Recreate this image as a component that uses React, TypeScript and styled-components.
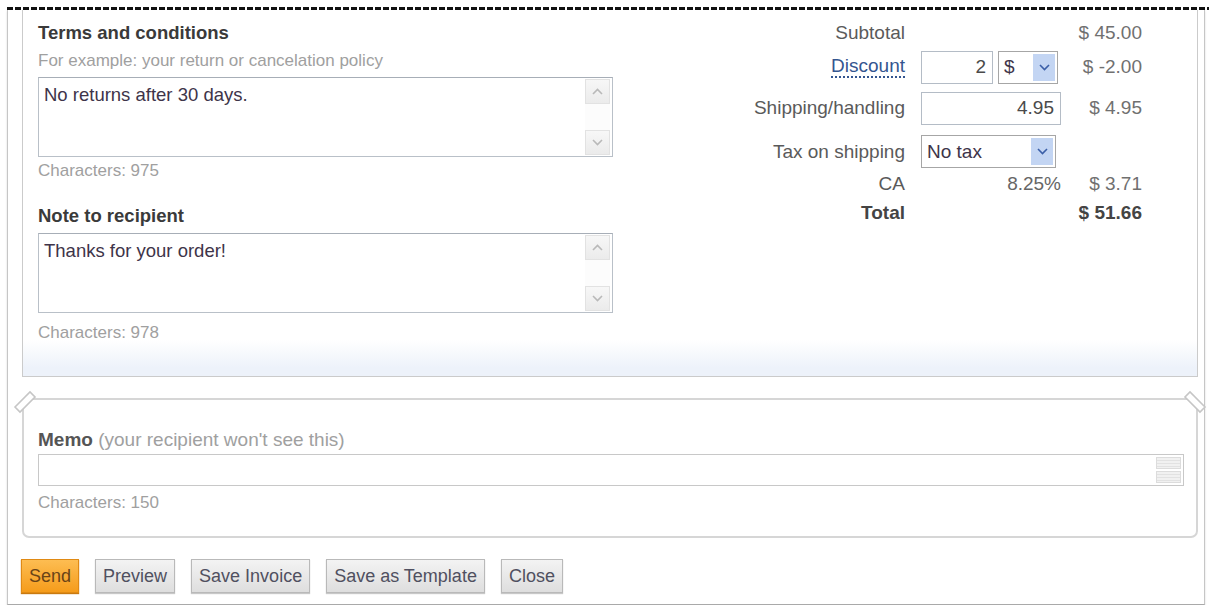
import React from "react";
import styled, { createGlobalStyle } from "styled-components";

const GlobalStyle = createGlobalStyle`
  html, body {
    margin: 0;
    padding: 0;
    background: #fff;
  }
  body {
    font-family: "Liberation Sans", Arial, sans-serif;
    color: #333;
  }
`;

const Chevron: React.FC<{ up?: boolean; color?: string }> = ({ up, color = "#b9b9b9" }) => (
  <svg width="11" height="7" viewBox="0 0 11 7">
    <path
      d={up ? "M1 6 L5.5 1.5 L10 6" : "M1 1 L5.5 5.5 L10 1"}
      stroke={color}
      strokeWidth="1.6"
      fill="none"
    />
  </svg>
);

const Notch: React.FC<{ side: "left" | "right" }> = ({ side }) => (
  <NotchMark $side={side} width="26" height="26" viewBox="0 0 26 26">
    <polygon
      points={side === "left" ? "2,18 17,3 22,8 7,23" : "24,18 9,3 4,8 19,23"}
      fill="#fff"
      stroke="#c6c6c6"
      strokeWidth="1.6"
    />
  </NotchMark>
);

interface FieldProps {
  text: string;
}

const TextField: React.FC<FieldProps> = ({ text }) => (
  <FieldBox>
    <FieldText>{text}</FieldText>
    <ScrollTrack>
      <ScrollButton>
        <Chevron up />
      </ScrollButton>
      <ScrollButton>
        <Chevron />
      </ScrollButton>
    </ScrollTrack>
  </FieldBox>
);

const SelectBox: React.FC<{ value: string; width: number }> = ({ value, width }) => (
  <Select style={{ width }}>
    <SelectValue>{value}</SelectValue>
    <SelectArrow>
      <Chevron color="#3b5fa8" />
    </SelectArrow>
  </Select>
);

export default function App() {
  return (
    <Page>
      <GlobalStyle />
      <DashedRule />
      <Frame>
        <Panel>
          <LeftColumn>
            <Title>Terms and conditions</Title>
            <Hint>For example: your return or cancelation policy</Hint>
            <TextField text="No returns after 30 days." />
            <Count $top={4}>Characters: 975</Count>
            <Title $top={24}>Note to recipient</Title>
            <TextField text="Thanks for your order!" />
            <Count $top={10}>Characters: 978</Count>
          </LeftColumn>

          <Summary>
            <Label>Subtotal</Label>
            <Cell />
            <Amount>$ 45.00</Amount>

            <Label>
              <LinkLabel>Discount</LinkLabel>
            </Label>
            <Cell>
              <NumberInput style={{ width: 72 }}>2</NumberInput>
              <SelectBox value="$" width={60} />
            </Cell>
            <Amount>$ -2.00</Amount>

            <Label>Shipping/handling</Label>
            <Cell>
              <NumberInput style={{ width: 140 }}>4.95</NumberInput>
            </Cell>
            <Amount>$ 4.95</Amount>

            <Label>Tax on shipping</Label>
            <Cell>
              <SelectBox value="No tax" width={135} />
            </Cell>
            <Amount />

            <Label>CA</Label>
            <Cell $right>8.25%</Cell>
            <Amount>$ 3.71</Amount>

            <Label $bold>Total</Label>
            <Cell />
            <Amount $bold>$ 51.66</Amount>
          </Summary>
        </Panel>

        <MemoBox>
          <Notch side="left" />
          <Notch side="right" />
          <MemoLabel>
            <strong>Memo</strong> <span>(your recipient won't see this)</span>
          </MemoLabel>
          <MemoInput>
            <Spinner>
              <SpinButton />
              <SpinButton />
            </Spinner>
          </MemoInput>
          <Count $top={7}>Characters: 150</Count>
        </MemoBox>

        <ButtonBar>
          <Button $primary>Send</Button>
          <Button>Preview</Button>
          <Button>Save Invoice</Button>
          <Button>Save as Template</Button>
          <Button>Close</Button>
        </ButtonBar>
      </Frame>
    </Page>
  );
}

const Page = styled.div`
  width: 1209px;
  padding-top: 7px;
`;

const DashedRule = styled.div`
  margin-left: 7px;
  height: 3px;
  background: repeating-linear-gradient(90deg, #111 0 6px, transparent 6px 8px);
`;

const Frame = styled.div`
  margin-left: 7px;
  width: 1196px;
  border: 1px solid #c6c6c6;
  border-top: none;
  border-bottom-color: #a9a9a9;
  box-shadow: 0 1px 2px rgba(0, 0, 0, 0.15);
  padding-bottom: 11px;
`;

const Panel = styled.div`
  box-sizing: border-box;
  margin-left: 14px;
  width: 1176px;
  display: flex;
  align-items: flex-start;
  padding: 12px 55px 33px 15px;
  border: 1px solid #cbcbcb;
  border-top: none;
  background: linear-gradient(#fff 0, #fff 330px, #edf2fa 358px, #edf2fa 100%);
`;

const LeftColumn = styled.div`
  width: 575px;
  display: flex;
  flex-direction: column;
`;

const Title = styled.div<{ $top?: number }>`
  margin-top: ${(p) => p.$top ?? 0}px;
  font-size: 18.5px;
  line-height: 22px;
  font-weight: bold;
  color: #3a3a3a;
`;

const Hint = styled.div`
  margin-top: 7px;
  font-size: 17px;
  line-height: 20px;
  color: #a0a0a0;
`;

const Count = styled.div<{ $top?: number }>`
  margin-top: ${(p) => p.$top ?? 6}px;
  font-size: 17px;
  line-height: 20px;
  color: #a0a0a0;
`;

const FieldBox = styled.div`
  box-sizing: border-box;
  margin-top: 6px;
  height: 80px;
  display: flex;
  border: 1px solid #b9c0c8;
  border-top-color: #a7aeb7;
  background: #fff;
`;

const FieldText = styled.div`
  flex: 1;
  padding: 6px 5px;
  font-size: 18.5px;
  line-height: 22px;
  color: #3e3449;
`;

const ScrollTrack = styled.div`
  width: 25px;
  margin: 1px 2px 1px 0;
  display: flex;
  flex-direction: column;
  justify-content: space-between;
  background: #fcfcfc;
`;

const ScrollButton = styled.div`
  box-sizing: border-box;
  height: 25px;
  display: flex;
  align-items: center;
  justify-content: center;
  border: 1px solid #e2e2e2;
  background: linear-gradient(#f7f7f7, #ebebeb);
`;

const Summary = styled.div`
  margin-left: auto;
  display: grid;
  grid-template-columns: max-content 140px 65px;
  grid-template-rows: 22px 34px 36px 39px 14px 32px;
  column-gap: 16px;
  row-gap: 6px;
  font-size: 19px;
  color: #5a5a5a;
`;

const Label = styled.div<{ $bold?: boolean }>`
  display: flex;
  align-items: center;
  justify-content: flex-end;
  white-space: nowrap;
  font-weight: ${(p) => (p.$bold ? "bold" : "normal")};
  color: ${(p) => (p.$bold ? "#444" : "#5a5a5a")};
`;

const LinkLabel = styled.span`
  color: #34558f;
  line-height: 20px;
  border-bottom: 2px dotted #34558f;
`;

const Cell = styled.div<{ $right?: boolean }>`
  display: flex;
  align-items: center;
  justify-content: ${(p) => (p.$right ? "flex-end" : "flex-start")};
  gap: 5px;
  color: #666;
`;

const Amount = styled.div<{ $bold?: boolean }>`
  display: flex;
  align-items: center;
  justify-content: flex-end;
  white-space: nowrap;
  font-weight: ${(p) => (p.$bold ? "bold" : "normal")};
  color: ${(p) => (p.$bold ? "#444" : "#707070")};
`;

const NumberInput = styled.div`
  box-sizing: border-box;
  height: 33px;
  display: flex;
  align-items: center;
  justify-content: flex-end;
  padding: 0 6px;
  border: 1px solid #b4bcc6;
  background: #fff;
  color: #4a4a4a;
`;

const Select = styled.div`
  box-sizing: border-box;
  height: 33px;
  display: flex;
  align-items: stretch;
  border: 1px solid #a6a6a6;
  background: #fff;
  padding: 2px;
`;

const SelectValue = styled.div`
  flex: 1;
  display: flex;
  align-items: center;
  padding-left: 3px;
  color: #3e3449;
`;

const SelectArrow = styled.div`
  width: 22px;
  display: flex;
  align-items: center;
  justify-content: center;
  background: #c3d5f3;
`;

const MemoBox = styled.div`
  position: relative;
  box-sizing: border-box;
  margin: 21px 0 0 14px;
  width: 1176px;
  height: 140px;
  padding: 29px 12px 0 14px;
  border: 2px solid #d6d6d6;
  border-radius: 7px;
`;

const NotchMark = styled.svg<{ $side: "left" | "right" }>`
  position: absolute;
  top: -11px;
  ${(p) => (p.$side === "left" ? "left: -11px;" : "right: -11px;")}
`;

const MemoLabel = styled.div`
  font-size: 19px;
  line-height: 22px;
  color: #a0a0a0;

  strong {
    color: #555;
  }
`;

const MemoInput = styled.div`
  box-sizing: border-box;
  margin-top: 3px;
  height: 32px;
  display: flex;
  justify-content: flex-end;
  padding: 2px;
  border: 1px solid #c8c8c8;
`;

const Spinner = styled.div`
  width: 25px;
  display: flex;
  flex-direction: column;
  gap: 2px;
`;

const SpinButton = styled.div`
  flex: 1;
  border: 1px solid #dcdcdc;
  background: repeating-linear-gradient(#f1f1f1 0 2px, #e2e2e2 2px 3px);
`;

const ButtonBar = styled.div`
  display: flex;
  gap: 16px;
  margin-top: 21px;
  padding-left: 13px;
`;

const Button = styled.div<{ $primary?: boolean }>`
  box-sizing: border-box;
  height: 34px;
  display: flex;
  align-items: center;
  padding: 0 7px;
  font-size: 18px;
  white-space: nowrap;
  border: 1px solid ${(p) => (p.$primary ? "#e08a14" : "#b9b9b9")};
  color: ${(p) => (p.$primary ? "#6a4417" : "#505060")};
  background: ${(p) =>
    p.$primary
      ? "linear-gradient(#fdbd52, #f59c1b)"
      : "linear-gradient(#f3f3f3, #dedede)"};
  box-shadow: ${(p) => (p.$primary ? "0 1px 1px #c97a10" : "0 1px 1px #c8c8c8")};
`;
